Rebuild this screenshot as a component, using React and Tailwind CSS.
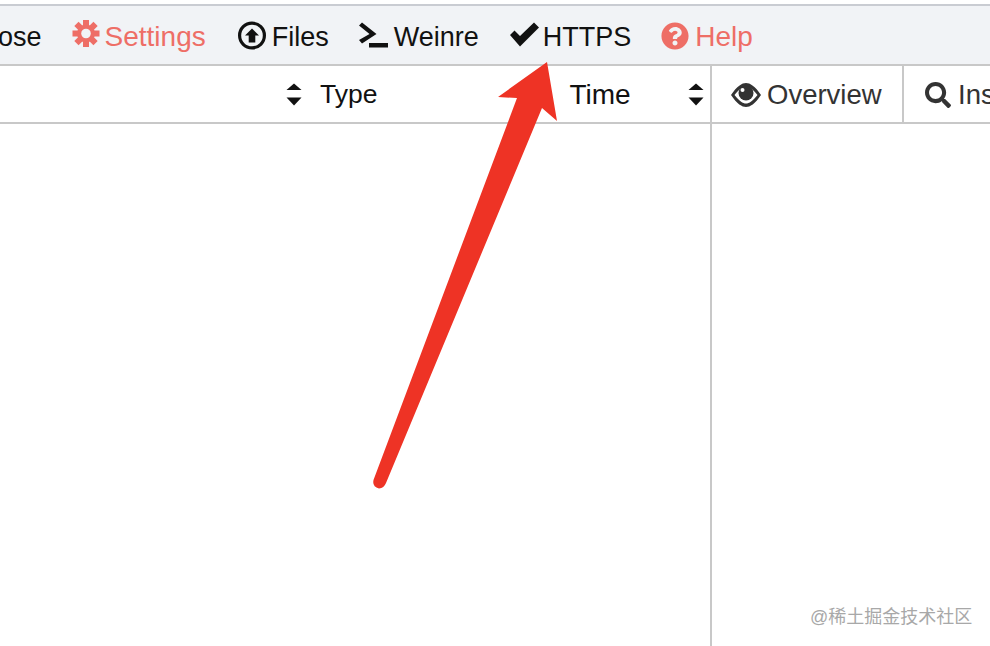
import React from "react";
import { FaQuestionCircle, FaSearch } from "react-icons/fa";

const GearIcon = () => (
  <svg width="26" height="30" viewBox="0 0 26 30" className="shrink-0 overflow-visible" fill="currentColor">
    <circle cx="13" cy="11.500" r="9" />
    {[0, 45, 90, 135, 180, 225, 270, 315].map((angle) => (
      <rect key={angle} x="10" y="-2" width="6" height="6" transform={`rotate(${angle} 13 11.500)`} />
    ))}
    <circle cx="13" cy="11.500" r="4.800" fill="#f1f3f6" />
  </svg>
);

const UploadIcon = () => (
  <svg width="28" height="30" viewBox="0 0 28 30" className="shrink-0 overflow-visible" fill="currentColor">
    <circle cx="14" cy="13.500" r="12.400" fill="none" stroke="currentColor" strokeWidth="3.200" />
    <path d="M14 6.500 L21 13.500 L17.300 13.500 L17.300 20.500 L10.700 20.500 L10.700 13.500 L7 13.500 Z" />
  </svg>
);

const TerminalIcon = () => (
  <svg width="29" height="30" viewBox="0 0 29 30" className="shrink-0 overflow-visible" fill="currentColor">
    <path d="M0 3.500 L3 0.500 L17.500 12 L3 21.500 L0 18 L10.500 12 Z" />
    <rect x="10" y="21" width="19" height="4.500" />
  </svg>
);

const CheckIcon = () => (
  <svg width="29" height="30" viewBox="0 0 29 30" className="shrink-0 overflow-visible" fill="currentColor">
    <path d="M0 13 L4.500 8.500 L10 14 L24 0.500 L29 5.500 L10 24.500 Z" />
  </svg>
);

const EyeIcon = () => (
  <svg width="30" height="24" viewBox="0 0 30 24" className="shrink-0" fill="currentColor">
    <path
      fillRule="evenodd"
      d="M0 12 C6 3 11 0 15 0 C19 0 24 3 30 12 C24 21 19 24 15 24 C11 24 6 21 0 12 Z M3.500 12 C8 18 12 20.500 15 20.500 C18 20.500 22 18 26.500 12 C22 6 18 3.500 15 3.500 C12 3.500 8 6 3.500 12 Z"
    />
    <circle cx="15" cy="10" r="7.500" />
    <circle cx="11.500" cy="7" r="2" fill="#fff" />
  </svg>
);

const SortIcon = ({ className }) => (
  <svg width="16" height="23" viewBox="0 0 16 23" className={`shrink-0 ${className}`} fill="currentColor">
    <path d="M8 0.500 L15.500 7 L0.500 7 Z" />
    <path d="M0.500 14.500 L15.500 14.500 L8 22.500 Z" />
  </svg>
);

const App = () => {
  return (
    <div className="relative h-[646px] w-[990px] overflow-hidden bg-white font-['Liberation_Sans',Arial,sans-serif] text-[27px]">
      <div className="h-[4px] bg-white" />

      {/* Toolbar */}
      <div className="flex h-[62px] items-center whitespace-nowrap border-y-2 border-t-[#c9ccd2] border-b-[#c8c8c8] bg-[#f1f3f6] pt-[4px] text-[#111]">
        <span className="ml-[-2px]">ose</span>
        <span className="ml-[31px] flex items-center gap-[6px] text-[28px] text-[#ee6e66]">
          <GearIcon />
          Settings
        </span>
        <span className="ml-[32px] flex items-center gap-[6px]">
          <UploadIcon />
          Files
        </span>
        <span className="ml-[30px] flex items-center gap-[6px]">
          <TerminalIcon />
          Weinre
        </span>
        <span className="ml-[31px] flex items-center gap-[4px]">
          <CheckIcon />
          HTTPS
        </span>
        <span className="ml-[30px] flex items-center gap-[6px] text-[28px] text-[#ee6e66]">
          <FaQuestionCircle size={28} className="mt-[-2px]" />
          Help
        </span>
      </div>

      <div className="flex h-[580px]">
        {/* Network list */}
        <div className="w-[712px] shrink-0 border-r-2 border-[#c8c8c8]">
          <div className="flex h-[58px] items-center border-b-2 border-[#c8c8c8] pt-[2px] text-[26.5px] text-[#111]">
            <SortIcon className="ml-[286px] mt-[-2px]" />
            <span className="ml-[18px]">Type</span>
            <span className="ml-[192px] text-[28px]">Time</span>
            <SortIcon className="ml-[57px] mt-[-2px]" />
          </div>
        </div>

        {/* Side tabs */}
        <div className="flex-1">
          <div className="flex h-[58px] items-stretch whitespace-nowrap border-b-2 border-[#c8c8c8] text-[27.5px] text-[#333]">
            <div className="flex w-[192px] shrink-0 items-center gap-[6px] border-r-2 border-[#c8c8c8] pl-[19px] pt-[2px]">
              <EyeIcon />
              Overview
            </div>
            <div className="flex items-center gap-[7px] pl-[21px] pt-[2px]">
              <FaSearch size={26} />
              Ins
            </div>
          </div>
        </div>
      </div>

      {/* Annotation arrow drawn over the screenshot */}
      <svg className="absolute left-0 top-0" width="990" height="646" viewBox="0 0 990 646">
        <path
          d="M547 62 L498 97 L517 98 L373.500 480 Q372 487 379 488.500 Q384 488 386 483 L542 108 L557 121 Z"
          fill="#ee3325"
        />
      </svg>

      <span className="absolute left-[810px] top-[604px] font-['Liberation_Sans','Noto_Sans_CJK_SC',sans-serif] text-[18px] text-[#a8a8a8]">
        @稀土掘金技术社区
      </span>
    </div>
  );
};

export default App;
